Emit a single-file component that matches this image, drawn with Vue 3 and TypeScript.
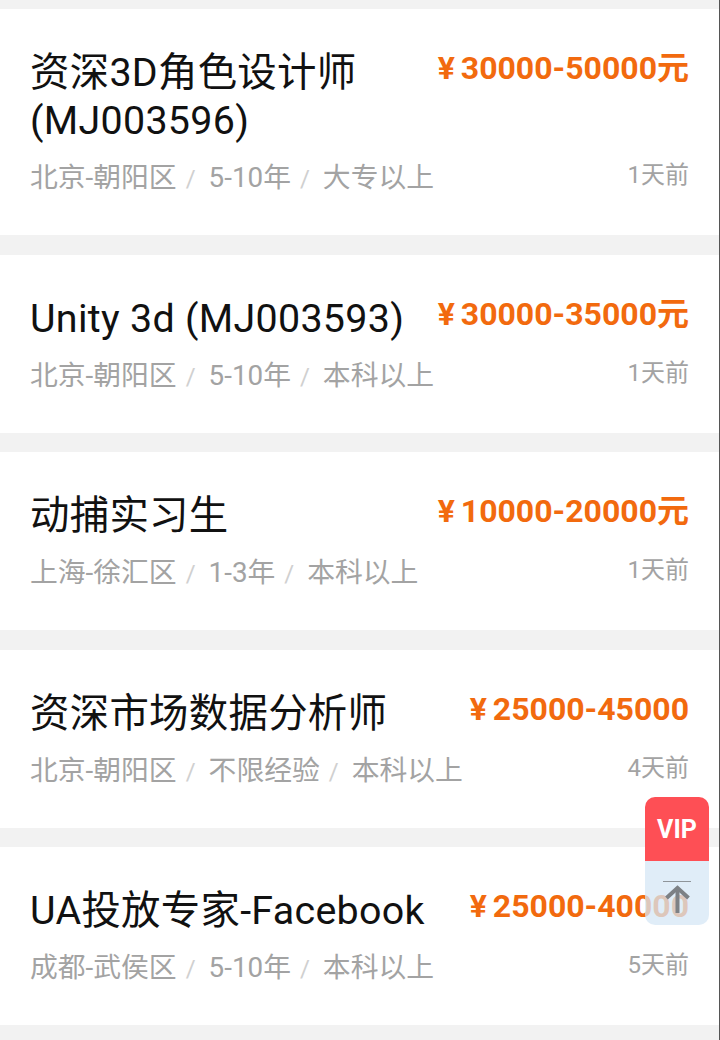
<template>
  <div class="page">
    <div v-for="job in jobs" :key="job.title" class="card">
      <div class="main">
        <div class="title">{{ job.title }}</div>
        <div class="meta">
          <template v-for="(m, i) in job.meta" :key="m">
            <span v-if="i > 0" class="sep">/</span>
            <span>{{ m }}</span>
          </template>
        </div>
      </div>
      <div class="side">
        <div class="salary"><span class="yen">¥</span>{{ job.salary }}</div>
        <div class="time">{{ job.time }}</div>
      </div>
    </div>
    <div class="float">
      <div class="vip">VIP</div>
      <div class="top">
        <svg width="34" height="36" viewBox="0 0 34 36">
          <path d="M3 1.5h28" stroke="#8f959a" stroke-width="1" fill="none" />
          <path d="M6.5 18 17.5 8l11 10" stroke="#7d8185" stroke-width="4" fill="none" />
          <path d="M17.5 9v24" stroke="#7d8185" stroke-width="4" fill="none" />
        </svg>
      </div>
    </div>
  </div>
</template>

<script setup lang="ts">
const jobs = [
  { title: "资深3D角色设计师(MJ003596)", meta: ["北京-朝阳区", "5-10年", "大专以上"], salary: "30000-50000元", time: "1天前" },
  { title: "Unity 3d (MJ003593)", meta: ["北京-朝阳区", "5-10年", "本科以上"], salary: "30000-35000元", time: "1天前" },
  { title: "动捕实习生", meta: ["上海-徐汇区", "1-3年", "本科以上"], salary: "10000-20000元", time: "1天前" },
  { title: "资深市场数据分析师", meta: ["北京-朝阳区", "不限经验", "本科以上"], salary: "25000-45000", time: "4天前" },
  { title: "UA投放专家-Facebook", meta: ["成都-武侯区", "5-10年", "本科以上"], salary: "25000-40000", time: "5天前" },
];
</script>

<style>
html, body { background: #f2f2f2; }
</style>

<style scoped>
.page {
  position: relative;
  height: 1040px;
  overflow: hidden;
  padding-top: 9px;
  box-sizing: border-box;
  background: #f2f2f2;
  border-right: 1px solid #555;
  display: flex;
  flex-direction: column;
  gap: 19.6px;
  font-family: Roboto, "Noto Sans CJK SC", sans-serif;
}
.card {
  display: flex;
  justify-content: space-between;
  background: #fff;
  padding: 39px 30px 37px 30px;
}
.main { width: 400px; }
.title {
  margin-top: 1px;
  font-size: 39.4px;
  letter-spacing: 0.3px;
  line-height: 48px;
  color: #111;
}
.meta {
  margin-top: 14px;
  font-size: 27.8px;
  line-height: 38px;
  color: #a3a3a3;
  white-space: nowrap;
}
.sep { margin: 0 13px 0 9px; color: #d0d0d0; font-size: 24px; }
.side {
  display: flex;
  flex-direction: column;
  align-items: flex-end;
  justify-content: space-between;
}
.salary {
  font-size: 32px;
  line-height: 40px;
  font-weight: 700;
  color: #f26a0e;
  white-space: nowrap;
}
.yen { margin-right: 6px; }
.time {
  font-size: 24px;
  line-height: 38px;
  margin-bottom: 4px;
  color: #a3a3a3;
}
.float {
  position: absolute;
  left: 645px;
  top: 797px;
  width: 64px;
  height: 128px;
  border-radius: 10px;
  overflow: hidden;
}
.vip {
  height: 64px;
  background: #fe4f55;
  color: #fff;
  font-size: 25px;
  font-weight: 700;
  text-align: center;
  line-height: 65px;
}
.top {
  height: 64px;
  background: rgba(214, 231, 245, 0.75);
  display: flex;
  justify-content: center;
  padding-top: 19px;
  box-sizing: border-box;
}
</style>
